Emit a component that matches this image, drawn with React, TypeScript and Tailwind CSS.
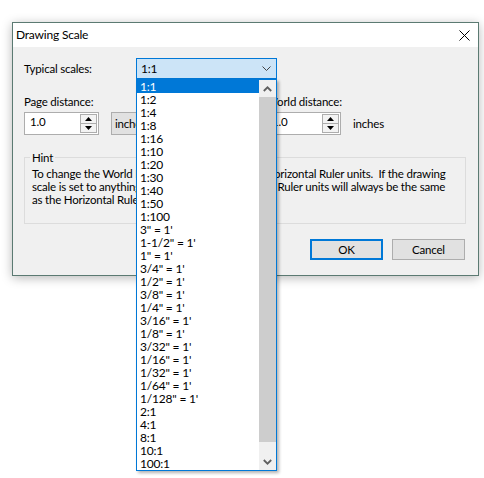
import React from 'react';

const scales = [
  '1:1', '1:2', '1:4', '1:8', '1:16', '1:10', '1:20', '1:30', '1:40', '1:50', '1:100',
  '3" = 1\'', '1-1/2" = 1\'', '1" = 1\'', '3/4" = 1\'', '1/2" = 1\'', '3/8" = 1\'',
  '1/4" = 1\'', '3/16" = 1\'', '1/8" = 1\'', '3/32" = 1\'', '1/16" = 1\'', '1/32" = 1\'',
  '1/64" = 1\'', '1/128" = 1\'', '2:1', '4:1', '8:1', '10:1', '100:1',
];

function SpinEdit({ value }: { value: string }) {
  return (
    <div className="flex h-[23px] w-[75px] border border-[#adadad] bg-white">
      <div className="flex-1 pl-[5px] pt-[2px] leading-[14px]">{value}</div>
      <div className="my-[1px] mr-[1px] flex w-[17px] flex-col">
        <div className="flex flex-1 items-center justify-center border border-[#adadad] bg-[#f3f3f3]">
          <svg width="7" height="4" viewBox="0 0 7 4">
            <path d="M0 4 L3.5 0 L7 4 Z" fill="#000" />
          </svg>
        </div>
        <div className="flex flex-1 items-center justify-center border border-t-0 border-[#adadad] bg-[#f3f3f3]">
          <svg width="7" height="4" viewBox="0 0 7 4">
            <path d="M0 0 L3.5 4 L7 0 Z" fill="#000" />
          </svg>
        </div>
      </div>
    </div>
  );
}

function ScaleList() {
  return (
    <div className="absolute left-0 top-[21px] z-10 flex h-[392px] w-[141px] border border-[#0078d7] bg-white shadow-[2px_2px_3px_rgba(0,0,0,0.3)]">
      <div className="flex-1">
        {scales.map((s, i) => (
          <div
            key={s}
            className={
              i === 0
                ? 'h-[13px] whitespace-pre bg-[#0078d7] pl-[3px] text-[12px] leading-[13px] text-white'
                : 'h-[13px] whitespace-pre pl-[3px] text-[12px] leading-[13px]'
            }
          >
            {s}
          </div>
        ))}
      </div>
      <div className="flex w-[17px] flex-col bg-[#f0f0f0]">
        <div className="flex h-[17px] items-center justify-center">
          <svg width="9" height="6" viewBox="0 0 9 6">
            <path d="M0.8 5 L4.5 1.3 L8.2 5" fill="none" stroke="#606060" strokeWidth="1.8" />
          </svg>
        </div>
        <div className="h-[345px] bg-[#cdcdcd]" />
        <div className="flex-1" />
        <div className="flex h-[17px] items-center justify-center">
          <svg width="9" height="6" viewBox="0 0 9 6">
            <path d="M0.8 1 L4.5 4.7 L8.2 1" fill="none" stroke="#606060" strokeWidth="1.8" />
          </svg>
        </div>
      </div>
    </div>
  );
}

export default function App() {
  return (
    <div className="h-[478px] w-[484px] bg-white pl-[12px] pt-[22px] font-['Lato','Liberation_Sans',sans-serif] text-[11.5px] tracking-[-0.2px] text-black">
      <div className="relative flex h-[254px] w-[467px] flex-col border border-[#5b7a72] bg-[#f0f0f0] shadow-[0_2px_10px_rgba(0,0,0,0.28)]">
        {/* title bar */}
        <div className="flex h-[24px] items-center justify-between bg-white pl-[3px] pr-[8px]">
          <span className="text-[12px]">Drawing Scale</span>
          <svg width="11" height="11" viewBox="0 0 11 11">
            <path d="M0.5 0.5 L10.5 10.5 M10.5 0.5 L0.5 10.5" stroke="#000" strokeWidth="1" />
          </svg>
        </div>

        <div className="flex flex-1 flex-col pl-[11px] pr-[12px]">
          {/* typical scales */}
          <div className="mt-[11px] flex items-center">
            <span className="w-[112px]">Typical scales:</span>
            <div className="relative">
              <div className="flex h-[21px] w-[141px] items-center justify-between border border-[#0078d7] bg-[#cce4f7] pl-[4px] pr-[5px]">
                <span className="text-[12px]">1:1</span>
                <svg width="9" height="5" viewBox="0 0 9 5">
                  <path d="M0.5 0.5 L4.5 4.5 L8.5 0.5" fill="none" stroke="#444" strokeWidth="1" />
                </svg>
              </div>
              <ScaleList />
            </div>
          </div>

          {/* distances */}
          <div className="mt-[15px] flex items-end">
            <div className="flex w-[75px] flex-col">
              <span className="mb-[3px] whitespace-nowrap leading-[15px]">Page distance:</span>
              <SpinEdit value="1.0" />
            </div>
            <div className="ml-[12px] flex h-[23px] w-[130px] items-center border border-[#adadad] bg-[#e1e1e1] pl-[3px]">
              inches
            </div>
            <div className="ml-[25px] flex w-[75px] flex-col">
              <span className="mb-[3px] whitespace-nowrap leading-[15px]">World distance:</span>
              <SpinEdit value="1.0" />
            </div>
            <div className="ml-[12px] flex h-[23px] items-center">inches</div>
          </div>

          {/* hint */}
          <fieldset className="mt-[15px] border border-[#dcdcdc] px-[7px] pb-[17px]">
            <legend className="ml-[-2px] px-[2px] leading-[15px]">Hint</legend>
            <p className="whitespace-pre pt-[2px] leading-[13px]">
              {'To change the World Distance units, change the Horizontal Ruler units.  If the drawing\n'}
              {'scale is set to anythin'}
              <span className="tracking-[0.1px]">{'g other than 1:1, the World'}</span>
              {' Ruler units will always be the same\n'}
              {'as the Horizontal Ruler units.'}
            </p>
          </fieldset>

          {/* buttons */}
          <div className="mr-[1px] mt-[15px] flex justify-end gap-[9px]">
            <button className="flex h-[21px] w-[73px] items-center justify-center border-2 border-[#0078d7] bg-[#e1e1e1]">
              OK
            </button>
            <button className="flex h-[21px] w-[73px] items-center justify-center border border-[#adadad] bg-[#e1e1e1]">
              Cancel
            </button>
          </div>
        </div>
      </div>
    </div>
  );
}
